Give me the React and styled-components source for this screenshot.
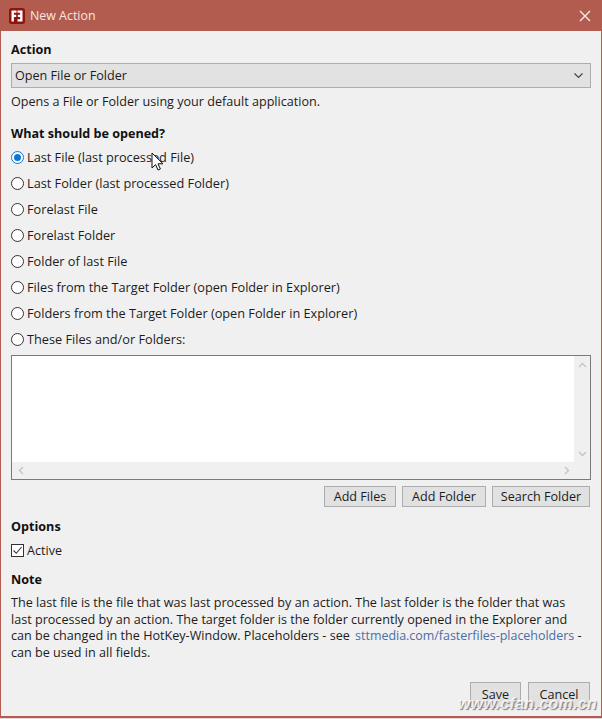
import React from "react";
import styled, { createGlobalStyle } from "styled-components";

const Global = createGlobalStyle`
  html, body { margin: 0; padding: 0; background: #ead9d6; }
  #root { width: 602px; height: 719px; }
`;

const Window = styled.div`
  position: relative;
  box-sizing: border-box;
  width: 602px;
  height: 718px;
  overflow: hidden;
  display: flex;
  flex-direction: column;
  background: #f0f0f0;
  border: solid #b25c50;
  border-width: 0 1px 2px 1px;
  font-family: "Open Sans", "Noto Sans", sans-serif;
  font-size: 12.6px;
  color: #1c1c1c;
`;

const TitleBar = styled.header`
  flex: none;
  height: 31px;
  margin: 0 -1px;
  padding: 0 9px;
  display: flex;
  align-items: center;
  gap: 5px;
  background: #b25c50;
  color: #f7e6e2;
  font-size: 12.4px;
`;

const TitleText = styled.span`
  flex: 1;
`;

const CloseButton = styled.span`
  display: flex;
  margin-right: 2px;
`;

const Body = styled.main`
  flex: 1;
  display: flex;
  flex-direction: column;
  padding: 0 10px;
  min-height: 0;
`;

const Heading = styled.h2`
  margin: ${(p) => p.$top}px 0 0;
  font-size: 12.6px;
  line-height: 18px;
  font-weight: 700;
  color: #111;
`;

const Select = styled.div`
  box-sizing: border-box;
  margin-top: 4px;
  height: 25px;
  padding: 0 7px 0 3px;
  display: flex;
  align-items: center;
  justify-content: space-between;
  background: #e2e2e2;
  border: 1px solid #adadad;
`;

const Description = styled.p`
  margin: 4px 0 0;
  line-height: 18px;
  padding-top: 1px;
`;

const RadioList = styled.div`
  margin-top: 1px;
  display: flex;
  flex-direction: column;
  font-size: 12.72px;
`;

const Option = styled.div`
  height: 26px;
  display: flex;
  align-items: center;
  gap: 3px;
`;

const Radio = styled.span`
  box-sizing: border-box;
  flex: none;
  width: 13px;
  height: 13px;
  border-radius: 50%;
  border: 1px solid ${(p) => (p.$on ? "#0d78d4" : "#333")};
  background: #fff;
  display: flex;
  align-items: center;
  justify-content: center;
  &::after {
    content: "";
    width: 7px;
    height: 7px;
    border-radius: 50%;
    background: ${(p) => (p.$on ? "#0d78d4" : "transparent")};
  }
`;

const ListBox = styled.div`
  box-sizing: border-box;
  margin-top: 3px;
  height: 125px;
  display: grid;
  grid-template-columns: 1fr 16px;
  grid-template-rows: 1fr 17px;
  border: 1px solid #7a7a7a;
  background: #fff;
`;

const ListArea = styled.div`
  background: #fff;
`;

const VScroll = styled.div`
  background: #f0f0f0;
  display: flex;
  flex-direction: column;
  justify-content: space-between;
  align-items: center;
  padding: 5px 0 4px;
`;

const HScroll = styled.div`
  background: #f0f0f0;
  display: flex;
  justify-content: space-between;
  align-items: center;
  padding: 0 3px 0 5px;
`;

const Corner = styled.div`
  background: #f0f0f0;
`;

const ButtonRow = styled.div`
  margin-top: ${(p) => p.$top}px;
  display: flex;
  justify-content: flex-end;
  gap: ${(p) => p.$gap}px;
  padding-right: ${(p) => p.$right}px;
`;

const Button = styled.div`
  box-sizing: border-box;
  width: ${(p) => p.$w}px;
  height: ${(p) => p.$h}px;
  display: flex;
  align-items: center;
  justify-content: center;
  background: #e1e1e1;
  border: 1px solid #adadad;
`;

const CheckRow = styled.div`
  margin-top: 5px;
  height: 18px;
  display: flex;
  align-items: center;
  gap: 3px;
`;

const CheckBox = styled.span`
  box-sizing: border-box;
  flex: none;
  width: 13px;
  height: 13px;
  border: 1px solid #333;
  background: #fff;
  display: flex;
`;

const Note = styled.p`
  margin: 6px 0 0;
  line-height: 16.7px;
`;

const NoteLink = styled.span`
  margin-left: 2px;
  font-size: 12.45px;
  color: #4a6ea8;
`;

const Cursor = styled.svg`
  position: absolute;
  left: 150px;
  top: 152px;
`;

const Watermark = styled.span`
  position: absolute;
  right: 4px;
  bottom: 3px;
  font-family: "Liberation Sans", sans-serif;
  font-size: 16px;
  font-weight: 700;
  font-style: italic;
  letter-spacing: 0.3px;
  color: rgba(255, 255, 255, 0.8);
  text-shadow: 1px 1px 1px rgba(90, 90, 90, 0.75);
`;

const Chevron = ({ d, color = "#c4c4c4", w = 9, h = 9, sw = 1.4 }) => (
  <svg width={w} height={h} viewBox="0 0 9 9" fill="none" stroke={color} strokeWidth={sw}>
    <path d={d} />
  </svg>
);

const options = [
  "Last File (last processed File)",
  "Last Folder (last processed Folder)",
  "Forelast File",
  "Forelast Folder",
  "Folder of last File",
  "Files from the Target Folder (open Folder in Explorer)",
  "Folders from the Target Folder (open Folder in Explorer)",
  "These Files and/or Folders:",
];

export default function App() {
  return (
    <>
      <Global />
      <Window>
        <TitleBar>
          <svg width="16" height="16" viewBox="0 0 16 16">
            <rect width="16" height="16" rx="2.5" fill="#8f1410" />
            <path d="M2.5 2.5h5v2.2H4.9v2h2.3v2.2H4.9v4.6H2.5zM8.5 2.5h5v11H8.5v-2.2h2.6V8.9H8.8V6.7h2.3v-2H8.5z" fill="#fff" />
          </svg>
          <TitleText>New Action</TitleText>
          <CloseButton>
            <svg width="12" height="12" viewBox="0 0 12 12" stroke="#fbeeec" strokeWidth="1.3" fill="none">
              <path d="M1 1l10 10M11 1L1 11" />
            </svg>
          </CloseButton>
        </TitleBar>
        <Body>
          <Heading $top={10}>Action</Heading>
          <Select>
            <span>Open File or Folder</span>
            <Chevron d="M0.5 2.5l4 4 4-4" color="#444" w={9} h={9} sw={1.2} />
          </Select>
          <Description>Opens a File or Folder using your default application.</Description>
          <Heading $top={14}>What should be opened?</Heading>
          <RadioList>
            {options.map((o, i) => (
              <Option key={o}>
                <Radio $on={i === 0} />
                <span>{o}</span>
              </Option>
            ))}
          </RadioList>
          <ListBox>
            <ListArea />
            <VScroll>
              <Chevron d="M1 6l3.5-3.5L8 6" />
              <Chevron d="M1 3l3.5 3.5L8 3" />
            </VScroll>
            <HScroll>
              <Chevron d="M6 1L2.5 4.5 6 8" />
              <Chevron d="M3 1l3.5 3.5L3 8" />
            </HScroll>
            <Corner />
          </ListBox>
          <ButtonRow $top={6} $gap={6} $right={1}>
            <Button $w={72} $h={21}>Add Files</Button>
            <Button $w={84} $h={21}>Add Folder</Button>
            <Button $w={98} $h={21}>Search Folder</Button>
          </ButtonRow>
          <Heading $top={11}>Options</Heading>
          <CheckRow>
            <CheckBox>
              <svg width="11" height="11" viewBox="0 0 11 11" fill="none" stroke="#333" strokeWidth="1.1">
                <path d="M1.5 5.5l2.8 2.8L9.6 2" />
              </svg>
            </CheckBox>
            <span>Active</span>
          </CheckRow>
          <Heading $top={12}>Note</Heading>
          <Note>
            The last file is the file that was last processed by an action. The last folder is the folder that was
            <br />
            last processed by an action. The target folder is the folder currently opened in the Explorer and
            <br />
            can be changed in the HotKey-Window. Placeholders - see <NoteLink>sttmedia.com/fasterfiles-placeholders</NoteLink> -
            <br />
            can be used in all fields.
          </Note>
          <ButtonRow $top={20} $gap={7} $right={1}>
            <Button $w={51} $h={26}>Save</Button>
            <Button $w={62} $h={26}>Cancel</Button>
          </ButtonRow>
        </Body>
        <Cursor width="14" height="20" viewBox="0 0 14 20">
          <path d="M1 1v15l3.6-3.4 2.4 5.4 2.4-1-2.4-5.2h5z" fill="#fff" stroke="#111" strokeWidth="1" />
        </Cursor>
        <Watermark>www.cfan.com.cn</Watermark>
      </Window>
    </>
  );
}
